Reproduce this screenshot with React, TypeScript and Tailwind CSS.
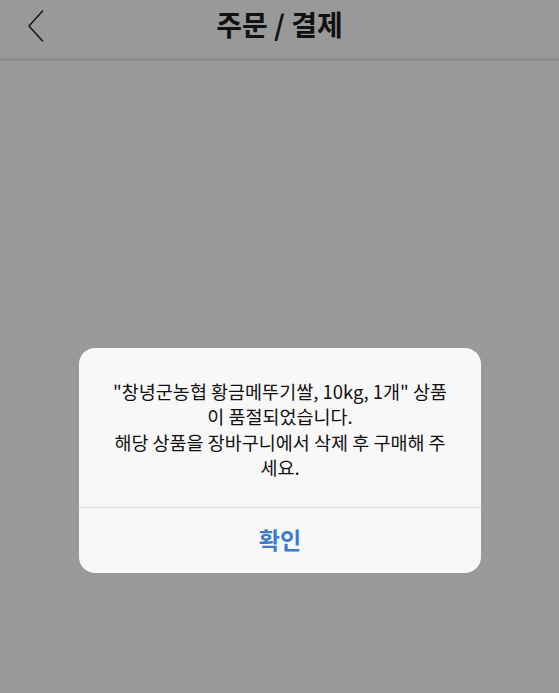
import React from "react";

const font = { fontFamily: '"Noto Sans CJK KR", "Noto Sans", sans-serif' };

export default function App() {
  return (
    <div className="relative w-[559px] h-[693px] bg-[#999999] overflow-hidden" style={font}>
      {/* Header */}
      <div className="h-[61px] flex items-center relative border-b-[3px] border-[#8d8d8d]">
        <button className="absolute left-[24px] top-[8px] w-[24px] h-[36px] flex items-center justify-center">
          <svg width="20" height="34" viewBox="0 0 20 34" fill="none">
            <path d="M17 1.5 L3 17 L17 32.5" stroke="#1a1a1a" strokeWidth="1.6" />
          </svg>
        </button>
        <h1 className="w-full text-center text-[28px] font-bold text-[#111] leading-none -mt-[10px]">주문 / 결제</h1>
      </div>

      {/* Alert dialog */}
      <div className="absolute left-[79px] top-[348px] w-[402px] h-[225px] bg-[#f8f8f8] rounded-[16px] flex flex-col">
        <div className="flex-1 flex items-center justify-center px-[20px] pt-[4px]">
          <p className="text-center text-[18.5px] leading-[25.5px] text-[#111]">
            "창녕군농협 황금메뚜기쌀, 10kg, 1개" 상품
            <br />이 품절되었습니다.
            <br />해당 상품을 장바구니에서 삭제 후 구매해 주
            <br />세요.
          </p>
        </div>
        <div className="h-px bg-[#d9d9d9]" />
        <div className="h-[65px] flex items-center justify-center">
          <span className="text-[23px] font-semibold text-[#3a7bd0] -mt-[2px]">확인</span>
        </div>
      </div>
    </div>
  );
}
